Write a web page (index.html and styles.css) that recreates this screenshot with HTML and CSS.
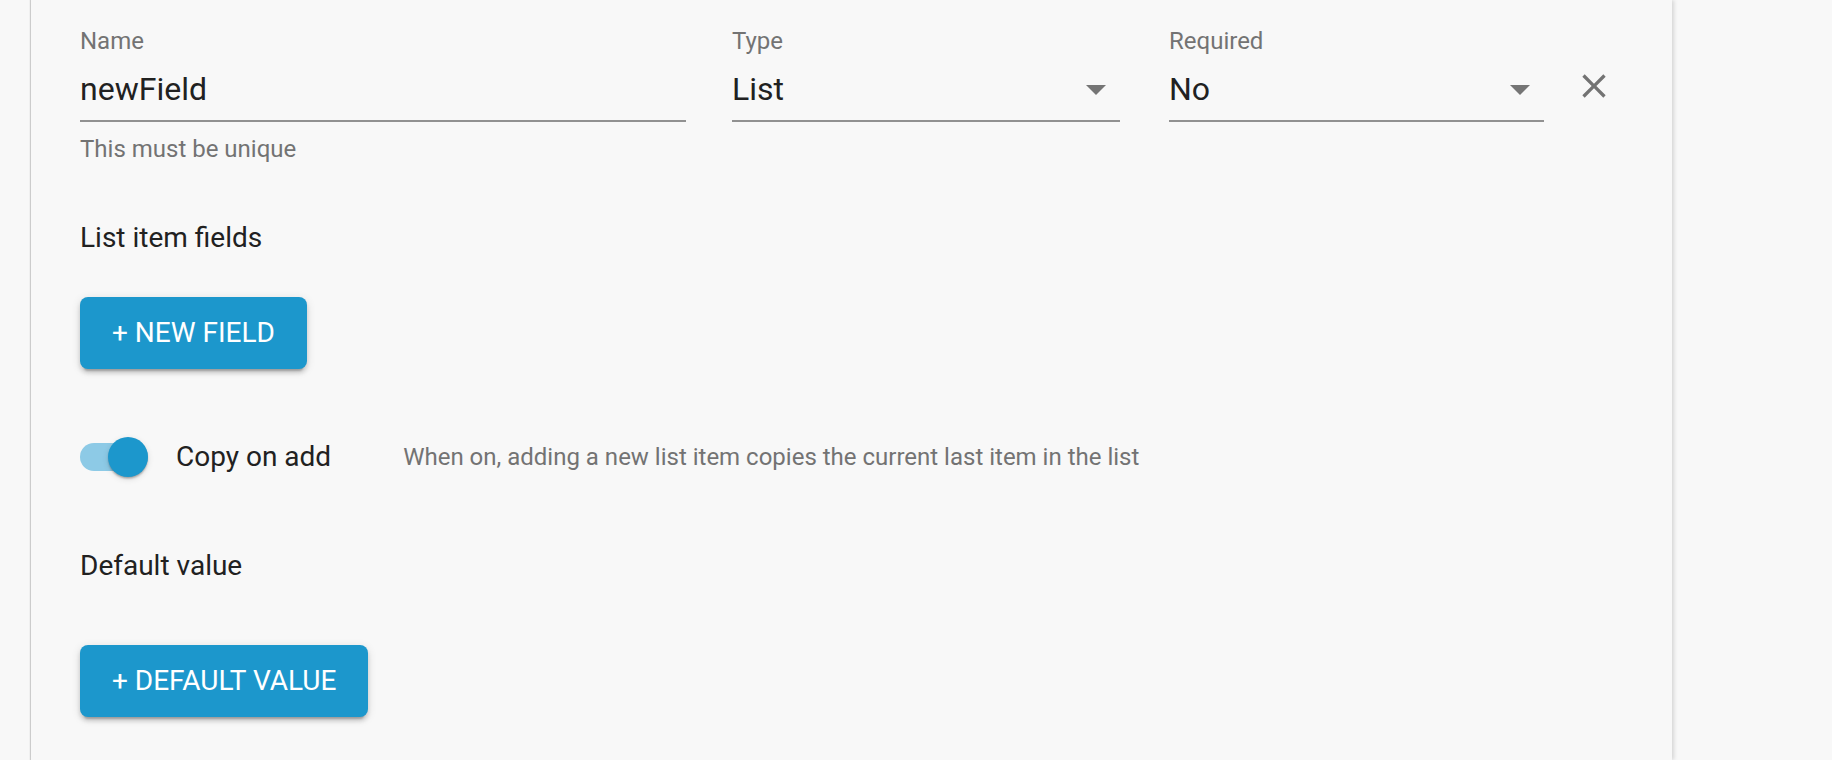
FILE: index.html
```html
<!DOCTYPE html>
<html lang="en">
<head>
<meta charset="utf-8">
<title>List field</title>
<link rel="stylesheet" href="styles.css">
</head>
<body>
<div class="card">
  <div class="field-row">
    <div class="field field-name">
      <label class="field-label">Name</label>
      <div class="input"><span class="input-value">newField</span></div>
      <div class="helper">This must be unique</div>
    </div>
    <div class="field field-type">
      <label class="field-label">Type</label>
      <div class="input select">
        <span class="input-value">List</span>
        <svg class="arrow" viewBox="0 0 24 24"><path d="M7 10l5 5 5-5z"/></svg>
      </div>
    </div>
    <div class="field field-required">
      <label class="field-label">Required</label>
      <div class="input select">
        <span class="input-value">No</span>
        <svg class="arrow" viewBox="0 0 24 24"><path d="M7 10l5 5 5-5z"/></svg>
      </div>
    </div>
    <button class="icon-btn" type="button" aria-label="Remove">
      <svg viewBox="0 0 24 24"><path d="M19 6.41L17.59 5 12 10.59 6.41 5 5 6.41 10.59 12 5 17.59 6.41 19 12 13.41 17.59 19 19 17.59 13.41 12z"/></svg>
    </button>
  </div>

  <div class="section-title title-list">List item fields</div>
  <button class="btn btn-new" type="button">+ NEW FIELD</button>

  <div class="switch-row">
    <span class="switch"><span class="track"></span><span class="thumb"></span></span>
    <span class="switch-label">Copy on add</span>
    <span class="switch-desc">When on, adding a new list item copies the current last item in the list</span>
  </div>

  <div class="section-title title-default">Default value</div>
  <button class="btn btn-default" type="button">+ DEFAULT VALUE</button>
</div>
</body>
</html>
```

FILE: styles.css
```css
html, body {
  margin: 0;
  padding: 0;
  background: #f8f8f8;
  overflow: hidden;
}

body {
  font-family: Roboto, "Liberation Sans", Arial, sans-serif;
  color: #212121;
}

.card {
  box-sizing: border-box;
  margin-left: 31px;
  width: 1641px;
  height: 760px;
  padding: 27px 0 0 49px;
  background: #f8f8f8;
  box-shadow: -1px 0 1px rgba(0, 0, 0, 0.16), 2px 0 4px rgba(0, 0, 0, 0.14);
  display: flex;
  flex-direction: column;
  align-items: flex-start;
}

.field-row {
  display: flex;
  align-items: flex-start;
}

.field {
  display: flex;
  flex-direction: column;
}

.field-name { width: 606px; margin-right: 46px; }
.field-type { width: 388px; margin-right: 49px; }
.field-required { width: 375px; }

.field-label {
  font-size: 24px;
  line-height: 28px;
  color: #737373;
  margin-bottom: 1px;
}

.input {
  display: flex;
  align-items: center;
  padding: 14px 0 12px;
  border-bottom: 2px solid #919191;
}

.input-value {
  flex: 1;
  font-size: 32px;
  line-height: 38px;
  color: #212121;
}

.arrow {
  width: 48px;
  height: 48px;
  margin: -5px 0;
  fill: #757575;
}

.helper {
  margin-top: 13px;
  font-size: 24px;
  line-height: 28px;
  color: #737373;
}

.icon-btn {
  margin: 39px 0 0 30px;
  padding: 0;
  width: 40px;
  height: 40px;
  border: 0;
  background: transparent;
  display: flex;
}

.icon-btn svg {
  width: 40px;
  height: 40px;
  fill: #737373;
}

.section-title {
  font-size: 28px;
  line-height: 32px;
  color: #212121;
}

.title-list { margin-top: 59px; }
.title-default { margin-top: 55px; }

.btn {
  flex: none;
  height: 72px;
  padding: 0 32px;
  border: 0;
  border-radius: 8px;
  background: #1c97cc;
  color: #ffffff;
  font-family: Roboto, "Liberation Sans", Arial, sans-serif;
  font-size: 28px;
  line-height: 72px;
  font-weight: 400;
  letter-spacing: 0;
  box-shadow: 0 6px 2px -4px rgba(0, 0, 0, 0.2), 0 4px 4px 0 rgba(0, 0, 0, 0.14), 0 2px 10px 0 rgba(0, 0, 0, 0.12);
}

.btn-new { margin-top: 43px; }
.btn-default { margin-top: 63px; }

.switch-row {
  margin-top: 50px;
  height: 76px;
  display: flex;
  align-items: center;
}

.switch {
  display: flex;
  align-items: center;
  width: 68px;
}

.track {
  width: 68px;
  height: 28px;
  border-radius: 14px;
  background: #8dcae6;
}

.thumb {
  width: 40px;
  height: 40px;
  margin-left: -40px;
  border-radius: 50%;
  background: #1c97cc;
  box-shadow: 0 2px 2px -1px rgba(0, 0, 0, 0.2), 0 2px 2px 0 rgba(0, 0, 0, 0.14), 0 2px 6px 0 rgba(0, 0, 0, 0.12);
}

.switch-label {
  margin-left: 28px;
  font-size: 28px;
  line-height: 32px;
  color: #212121;
}

.switch-desc {
  margin-left: 72px;
  font-size: 24px;
  line-height: 28px;
  color: #737373;
}
```
